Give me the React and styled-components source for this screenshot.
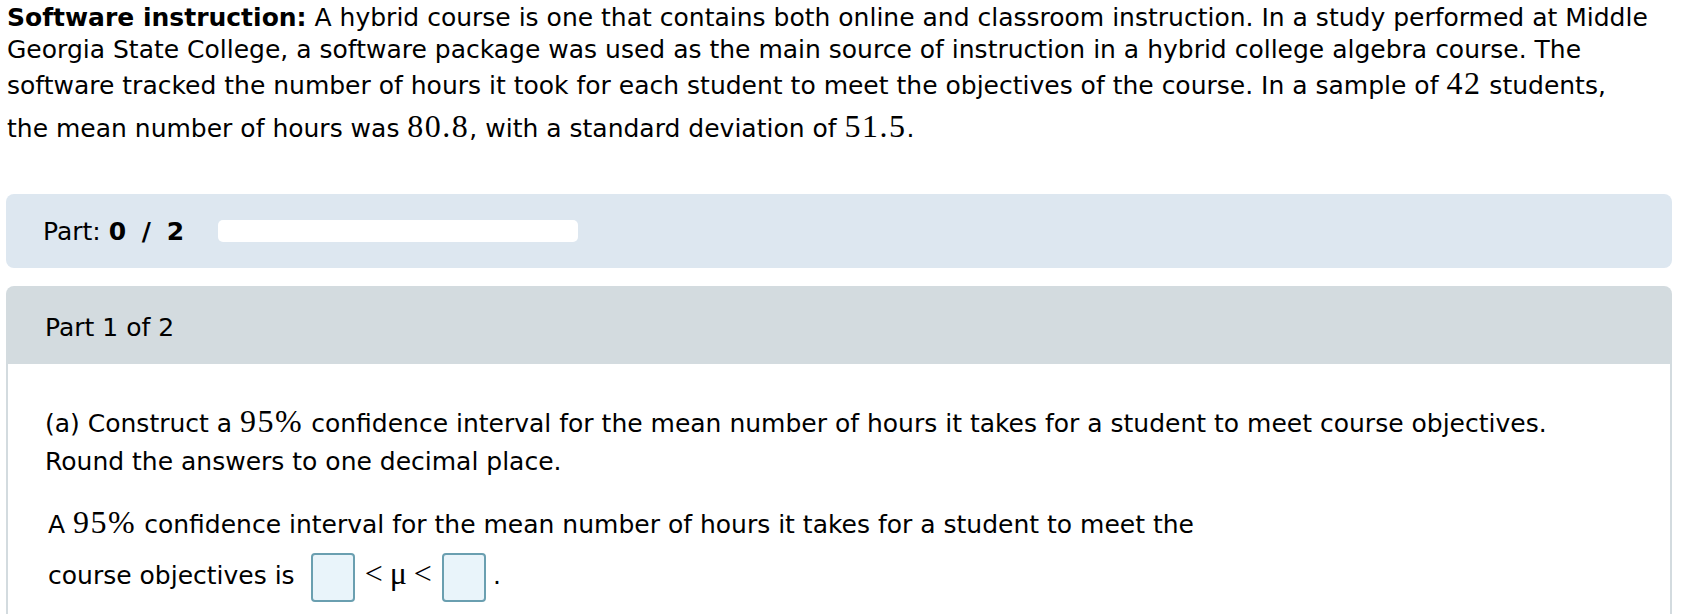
import styled, { createGlobalStyle } from "styled-components";

const Global = createGlobalStyle`
  body {
    margin: 0;
    background: #ffffff;
    color: #000000;
    font-family: "DejaVu Sans", Verdana, sans-serif;
    font-size: 25px;
  }
`;

const Page = styled.div`
  width: 1688px;
  padding: 2px 16px 0 7px;
  box-sizing: border-box;
`;

const Intro = styled.p`
  margin: 0 0 49px 0;
  line-height: 32px;
`;

const Bold = styled.b`
  font-weight: bold;
  word-spacing: ${(p) => p.$spread || 0}px;
`;

const Math = styled.span`
  display: inline-block;
  font-family: "Liberation Serif", "Times New Roman", serif;
  font-size: 32px;
  letter-spacing: 1.5px;
  line-height: 1;
  padding-top: ${(p) => p.$pad || 0}px;
`;

const ProgressBox = styled.div`
  margin-left: -1px;
  height: 74px;
  background: #dde7f0;
  border-radius: 8px;
  display: flex;
  align-items: center;
  padding-left: 37px;
  gap: 34px;
`;

const ProgressLabel = styled.span`
  line-height: 1;
`;

const Track = styled.div`
  width: 360px;
  height: 22px;
  background: #ffffff;
  border-radius: 5px;
`;

const Panel = styled.section`
  margin: 18px 0 0 -1px;
`;

const PanelHead = styled.div`
  height: 78px;
  background: #d3dbdf;
  border-radius: 8px 8px 0 0;
  display: flex;
  align-items: center;
  padding-left: 39px;
  padding-top: 5px;
  box-sizing: border-box;
`;

const PanelBody = styled.div`
  border-left: 2px solid #d3dbdf;
  border-right: 2px solid #d3dbdf;
  padding: 41px 0 30px 37px;
`;

const Question = styled.p`
  margin: 0 0 20px 0;
  line-height: 38px;
`;

const Answer = styled.div`
  padding-left: 3px;
  line-height: 48px;
`;

const Blank = styled.span`
  display: inline-block;
  width: 44px;
  height: 49px;
  box-sizing: border-box;
  border: 2px solid #6a9fb0;
  border-radius: 4px;
  background: #e9f4fa;
  vertical-align: middle;
  margin: 0 ${(p) => p.$right || 0}px 0 ${(p) => p.$left || 0}px;
`;

const Rel = styled.span`
  font-family: "Liberation Serif", "Times New Roman", serif;
  font-size: 32px;
  margin: 0 ${(p) => p.$gap || 0}px;
`;

export default function App() {
  return (
    <>
      <Global />
      <Page>
        <Intro>
          <Bold>Software instruction:</Bold> A hybrid course is one that contains both online and
          classroom instruction. In a study performed at Middle
          <br />
          Georgia State College, a software package was used as the main source of instruction in a
          hybrid college algebra course. The
          <br />
          software tracked the number of hours it took for each student to meet the objectives of
          the course. In a sample of <Math $pad={1}>42</Math> students,
          <br />
          the mean number of hours was <Math $pad={8}>80.8</Math>, with a standard deviation of{" "}
          <Math $pad={8}>51.5</Math>.
        </Intro>

        <ProgressBox>
          <ProgressLabel>
            Part: <Bold $spread={7}>0 / 2</Bold>
          </ProgressLabel>
          <Track />
        </ProgressBox>

        <Panel>
          <PanelHead>Part 1 of 2</PanelHead>
          <PanelBody>
            <Question>
              (a) Construct a <Math>95%</Math> confidence interval for the mean number of hours it
              takes for a student to meet course objectives.
              <br />
              Round the answers to one decimal place.
            </Question>
            <Answer>
              A <Math>95%</Math> confidence interval for the mean number of hours it takes for a
              student to meet the
              <br />
              course objectives is
              <Blank $left={16} $right={10} />
              <Rel $gap={0}>&lt;</Rel>
              <Rel $gap={7}>μ</Rel>
              <Rel $gap={0}>&lt;</Rel>
              <Blank $left={10} $right={7} />.
            </Answer>
          </PanelBody>
        </Panel>
      </Page>
    </>
  );
}
